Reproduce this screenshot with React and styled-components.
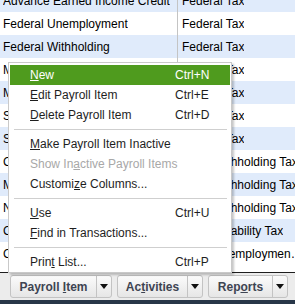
import React from "react";
import styled, { createGlobalStyle } from "styled-components";

const Global = createGlobalStyle`
  html, body { margin: 0; padding: 0; background: #fff; }
  body { font-family: "Liberation Sans", Arial, sans-serif; font-size: 12px; }
  #root { width: 295px; height: 304px; overflow: hidden; }
`;

const Screen = styled.div`
  position: relative;
  width: 295px;
  height: 304px;
  display: flex;
  flex-direction: column;
  overflow: hidden;
  background: #fff;
`;

const ListArea = styled.div`
  height: 272px;
  overflow: hidden;
  background: #fff;
  border-bottom: 1px solid #1e1e1e;
`;

const Rows = styled.div`
  margin-top: -11px;
  display: flex;
  flex-direction: column;
`;

const Row = styled.div`
  display: grid;
  grid-template-columns: 177px 128px 1fr;
  height: 23px;
  background: ${(p) => (p.$alt ? "#e0ebfb" : "#fff")};
  color: #000;
`;

const Cell = styled.div`
  display: flex;
  align-items: center;
  padding-left: ${(p) => (p.$second ? "4px" : "3px")};
  border-left: ${(p) => (p.$second ? "1px solid #c4c4c4" : "none")};
  white-space: nowrap;
  overflow: hidden;
  min-width: 0;
  span { overflow: hidden; text-overflow: ellipsis; }
`;

const Toolbar = styled.div`
  height: 27px;
  background: #ececec;
  display: flex;
  align-items: flex-start;
  gap: 5px;
  padding: 2px 0 0 10px;
  box-sizing: border-box;
`;

const SplitButton = styled.div`
  display: flex;
  height: 23px;
  box-sizing: border-box;
  border: 1px solid #c3c3c3;
  border-radius: 3px;
  background: linear-gradient(#fbfbfb, #e6e6e6);
`;

const ButtonLabel = styled.div`
  width: ${(p) => p.$w}px;
  display: flex;
  align-items: center;
  justify-content: center;
  font-weight: bold;
  font-size: 12px;
  color: #3e4452;
  border-right: 1px solid #c3c3c3;
`;

const ButtonArrow = styled.div`
  width: 14px;
  display: flex;
  align-items: center;
  justify-content: center;
`;

const BottomBar = styled.div`
  height: 4px;
  background: #283648;
`;

const Menu = styled.div`
  position: absolute;
  left: 8px;
  top: 62px;
  width: 224px;
  box-sizing: border-box;
  background: #fff;
  border: 1px solid #c9c9c9;
  padding: 2px 1px 0 1px;
  box-shadow: 2px 2px 2px rgba(0, 0, 0, 0.22);
  display: flex;
  flex-direction: column;
`;

const Item = styled.div`
  height: 20px;
  display: grid;
  grid-template-columns: 145px 1fr;
  align-items: center;
  padding-left: 20px;
  background: ${(p) => (p.$active ? "#4f9b1e" : "transparent")};
  color: ${(p) => (p.$active ? "#fff" : p.$disabled ? "#a8a8a8" : "#1e1e1e")};
  white-space: nowrap;
`;

const Shortcut = styled.span``;

const Separator = styled.div`
  height: 9px;
  display: flex;
  align-items: center;
  padding: 0 3px 0 4px;
  &::after {
    content: "";
    flex: 1;
    height: 1px;
    background: #cfcfcf;
  }
`;

const rows = [
  ["Advance Earned Income Credit", "Federal Tax"],
  ["Federal Unemployment", "Federal Tax"],
  ["Federal Withholding", "Federal Tax"],
  ["Medicare Company", "Federal Tax"],
  ["Medicare Employee", "Federal Tax"],
  ["Social Security Company", "Federal Tax"],
  ["Social Security Employee", "Federal Tax"],
  ["CA - Withholding", "State Withholding Tax"],
  ["MI - Withholding", "State Withholding Tax"],
  ["NY - Withholding", "State Withholding Tax"],
  ["CA - Disability", "State Disability Tax"],
  ["CA - Unemployment", "State Unemployment Tax"],
];

const Arrow = () => (
  <svg width="8" height="5" viewBox="0 0 8 5">
    <path d="M0 0 H8 L4 5 Z" fill="#111" />
  </svg>
);

const U = ({ children }) => <u>{children}</u>;

export default function App() {
  return (
    <Screen>
      <Global />
      <ListArea>
        <Rows>
          {rows.map(([a, b], i) => (
            <Row key={i} $alt={i % 2 === 0}>
              <Cell><span>{a}</span></Cell>
              <Cell $second><span>{b}</span></Cell>
              <Cell />
            </Row>
          ))}
        </Rows>
      </ListArea>
      <Toolbar>
        <SplitButton>
          <ButtonLabel $w={85}>Payroll&nbsp;<U>I</U>tem</ButtonLabel>
          <ButtonArrow><Arrow /></ButtonArrow>
        </SplitButton>
        <SplitButton>
          <ButtonLabel $w={69}>Ac<U>t</U>ivities</ButtonLabel>
          <ButtonArrow><Arrow /></ButtonArrow>
        </SplitButton>
        <SplitButton>
          <ButtonLabel $w={63}>Rep<U>o</U>rts</ButtonLabel>
          <ButtonArrow><Arrow /></ButtonArrow>
        </SplitButton>
      </Toolbar>
      <BottomBar />
      <Menu>
        <Item $active><span><U>N</U>ew</span><Shortcut>Ctrl+N</Shortcut></Item>
        <Item><span><U>E</U>dit Payroll Item</span><Shortcut>Ctrl+E</Shortcut></Item>
        <Item><span><U>D</U>elete Payroll Item</span><Shortcut>Ctrl+D</Shortcut></Item>
        <Separator />
        <Item><span><U>M</U>ake Payroll Item Inactive</span><Shortcut /></Item>
        <Item $disabled><span>Show In<U>a</U>ctive Payroll Items</span><Shortcut /></Item>
        <Item><span>Customi<U>z</U>e Columns...</span><Shortcut /></Item>
        <Separator />
        <Item><span><U>U</U>se</span><Shortcut>Ctrl+U</Shortcut></Item>
        <Item><span><U>F</U>ind in Transactions...</span><Shortcut /></Item>
        <Separator />
        <Item><span>Prin<U>t</U> List...</span><Shortcut>Ctrl+P</Shortcut></Item>
      </Menu>
    </Screen>
  );
}
